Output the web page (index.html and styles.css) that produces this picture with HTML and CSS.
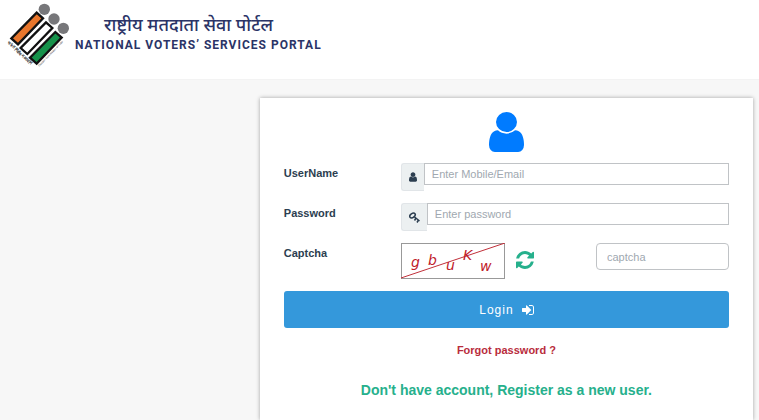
FILE: index.html
```html
<!DOCTYPE html>
<html lang="en">
<head>
    <meta charset="UTF-8">
    <meta name="viewport" content="width=device-width, initial-scale=1.0">
    <title>National Voters' Services Portal</title>
    <link rel="stylesheet" href="styles.css">
</head>
<body>
    <header class="header">
        <svg class="emblem" viewBox="0 0 210 210" aria-hidden="true">
            <g fill="#77777a">
                <circle cx="133" cy="28" r="17"/>
                <circle cx="162" cy="57" r="17"/>
                <circle cx="190" cy="85" r="17"/>
            </g>
            <g stroke="#111" stroke-width="7">
                <path fill="#e8762c" d="M110 38L129 55L54 133L34 115Z"/>
                <path fill="#fff" d="M138 67L157 84L82 162L62 144Z"/>
                <path fill="#16924a" d="M166 96L185 113L110 191L90 173Z"/>
            </g>
            <text class="emblem-text hindi" transform="translate(22 130) rotate(43)" lang="hi">भारत निर्वाचन आयोग</text>
            <text class="emblem-text" transform="translate(118 200) rotate(-46)">Election Commission of India</text>
        </svg>
        <div class="brand">
            <div class="brand-hindi" lang="hi">राष्ट्रीय मतदाता सेवा पोर्टल</div>
            <div class="brand-english">NATIONAL VOTERS’ SERVICES PORTAL</div>
        </div>
    </header>

    <main class="main">
        <form class="login-card">
            <svg class="avatar" viewBox="256 128 1280 1536" preserveAspectRatio="none" aria-hidden="true">
                <path d="M1536 1399q0 109-62.5 187t-150.5 78h-854q-88 0-150.5-78t-62.5-187q0-85 8.5-160.5t31.5-152 58.5-131 94-89 134.5-34.5q131 128 313 128t313-128q76 0 134.5 34.5t94 89 58.5 131 31.5 152 8.5 160.5zm-256-887q0 159-112.5 271.5t-271.5 112.5-271.5-112.5-112.5-271.5 112.5-271.5 271.5-112.5 271.5 112.5 112.5 271.5z"/>
            </svg>

            <div class="form-row">
                <label for="username">UserName</label>
                <div class="input-group">
                    <span class="addon">
                        <svg width="8" height="10" viewBox="256 128 1280 1536" aria-hidden="true">
                            <path d="M1536 1399q0 109-62.5 187t-150.5 78h-854q-88 0-150.5-78t-62.5-187q0-85 8.5-160.5t31.5-152 58.5-131 94-89 134.5-34.5q131 128 313 128t313-128q76 0 134.5 34.5t94 89 58.5 131 31.5 152 8.5 160.5zm-256-887q0 159-112.5 271.5t-271.5 112.5-271.5-112.5-112.5-271.5 112.5-271.5 271.5-112.5 271.5 112.5 112.5 271.5z"/>
                        </svg>
                    </span>
                    <input type="text" id="username" placeholder="Enter Mobile/Email">
                </div>
            </div>

            <div class="form-row">
                <label for="password">Password</label>
                <div class="input-group">
                    <span class="addon">
                        <svg class="key" width="11" height="11" viewBox="0 0 22 22" aria-hidden="true">
                            <ellipse cx="7" cy="7" rx="6" ry="4" transform="rotate(-35 7 7)"/>
                            <path d="M10 9L21 18M14 12L11 17M19 16L16 21"/>
                        </svg>
                    </span>
                    <input type="password" id="password" placeholder="Enter password">
                </div>
            </div>

            <div class="form-row">
                <label for="captcha">Captcha</label>
                <div class="captcha-group">
                    <svg class="captcha-image" viewBox="0 0 104 36" role="img" aria-label="Captcha">
                        <rect x="0.5" y="0.5" width="103" height="35"/>
                        <path d="M0 35L104 0"/>
                        <text x="10" y="24">g</text>
                        <text x="27" y="22">b</text>
                        <text x="45" y="27">u</text>
                        <text x="62" y="17">K</text>
                        <text x="79" y="28">w</text>
                    </svg>
                    <button type="button" class="refresh" aria-label="Refresh captcha">
                        <svg width="18" height="18" viewBox="128 128 1536 1536" aria-hidden="true">
                            <path d="M1639 1056q0 5-1 7-64 268-268 434.5t-478 166.5q-146 0-282.5-55t-243.5-157l-129 129q-19 19-45 19t-45-19-19-45v-448q0-26 19-45t45-19h448q26 0 45 19t19 45-19 45l-137 137q71 66 161 102t187 36q134 0 250-65t186-179q11-17 53-117 8-23 30-23h192q13 0 22.5 9.5t9.5 22.5zm25-800v448q0 26-19 45t-45 19h-448q-26 0-45-19t-19-45 19-45l138-138q-148-137-349-137-134 0-250 65t-186 179q-11 17-53 117-8 23-30 23h-199q-13 0-22.5-9.5t-9.5-22.5v-7q65-268 270-434.5t480-166.5q146 0 284 55.5t245 156.5l130-129q19-19 45-19t45 19 19 45z"/>
                        </svg>
                    </button>
                    <input type="text" id="captcha" placeholder="captcha">
                </div>
            </div>

            <button type="button" class="login-button">
                Login
                <svg width="12" height="12" viewBox="128 192 1536 1408" aria-hidden="true">
                    <path d="M1312 896q0 26-19 45l-544 544q-19 19-45 19t-45-19-19-45v-288h-448q-26 0-45-19t-19-45v-384q0-26 19-45t45-19h448v-288q0-26 19-45t45-19 45 19l544 544q19 19 19 45zm352-352v704q0 119-84.5 203.5t-203.5 84.5h-320q-13 0-22.5-9.5t-9.5-22.5q0-4-1-20t-.5-26.5 3-23.5 10-19.5 20.5-6.5h320q66 0 113-47t47-113v-704q0-66-47-113t-113-47h-312l-11.5-1-11.5-3-8-5.5-7-9-2-13.5q0-4-1-20t-.5-26.5 3-23.5 10-19.5 20.5-6.5h320q119 0 203.5 84.5t84.5 203.5z"/>
                </svg>
            </button>

            <a class="forgot" href="#">Forgot password ?</a>
            <a class="register" href="#">Don't have account, Register as a new user.</a>
        </form>
    </main>
</body>
</html>
```
FILE: styles.css
```css
* {
    box-sizing: border-box;
}
body {
    font-family: 'Liberation Sans', Arial, sans-serif;
    font-size: 11px;
    color: #2c3e50;
    background-color: #f7f7f7;
    margin: 0;
    min-height: 100vh;
    display: flex;
    flex-direction: column;
}
.header {
    display: flex;
    align-items: flex-start;
    background-color: #fff;
    height: 80px;
    border-bottom: 1px solid #f3f3f3;
}
.emblem {
    width: 70px;
    height: 70px;
    flex: none;
}
.emblem-text {
    font-size: 8px;
    fill: #333;
}
.emblem-text.hindi {
    font-size: 13px;
    font-weight: bold;
}
.brand {
    padding: 12px 0 0 5px;
    color: #2b3467;
    white-space: nowrap;
}
.brand-hindi {
    padding-left: 29px;
    font-family: 'Noto Sans', 'Noto Sans Devanagari', sans-serif;
    font-size: 18px;
    font-weight: 500;
    line-height: 25px;
}
.brand-english {
    font-family: Roboto, 'Liberation Sans', sans-serif;
    font-size: 12px;
    font-weight: bold;
    line-height: 16px;
    letter-spacing: 1px;
}
.main {
    flex: 1;
    display: flex;
    justify-content: flex-end;
    padding: 18px 6px 0 0;
}
.login-card {
    width: 65.5%;
    display: flex;
    flex-direction: column;
    padding: 14px 24px 20px;
    background-color: #fff;
    box-shadow: 0 0 4px rgba(0, 0, 0, 0.35);
}
.avatar {
    width: 35px;
    height: 40px;
    margin-bottom: 11px;
    align-self: center;
    fill: #007bff;
}
.form-row {
    display: flex;
    align-items: flex-start;
    height: 40px;
}
.form-row label {
    flex: 0 0 117px;
    font-weight: bold;
    line-height: 20px;
}
.input-group,
.captcha-group {
    flex: 1;
    display: flex;
    align-items: flex-start;
}
.addon {
    display: flex;
    padding: 0 7px;
    height: 28px;
    align-items: center;
    background-color: #ecf0f1;
    border: 1px solid #e1e5e8;
    border-right: none;
    border-radius: 3px 0 0 3px;
    fill: #2c3e50;
}
.key {
    fill: none;
    stroke: #2c3e50;
    stroke-width: 3;
}
input {
    font-family: inherit;
    color: #555;
    background-color: #fff;
    border: 1px solid #c0c3c6;
}
input::placeholder {
    color: #a0a8b0;
    opacity: 1;
}
.input-group input {
    flex: 1;
    min-width: 0;
    height: 22px;
    padding: 0 7px;
    font-size: 11px;
}
.captcha-image {
    width: 104px;
    height: 36px;
    fill: none;
    stroke: #999;
}
.captcha-image path {
    stroke: #c0303a;
}
.captcha-image text {
    font-family: 'DejaVu Sans', sans-serif;
    font-size: 14px;
    font-style: italic;
    fill: #c0202a;
    stroke: none;
}
.refresh {
    display: flex;
    margin: 8px 0 0 11px;
    padding: 0;
    border: none;
    background: none;
    fill: #26b08c;
    cursor: pointer;
}
.captcha-group input {
    width: 133px;
    height: 27px;
    margin-left: auto;
    padding: 0 10px;
    font-size: 11px;
    border-radius: 4px;
}
.login-button {
    display: flex;
    justify-content: center;
    align-items: center;
    gap: 8px;
    height: 37px;
    margin-top: 8px;
    font-family: inherit;
    font-size: 12px;
    letter-spacing: 1px;
    color: #fff;
    fill: #fff;
    background-color: #3498db;
    border: none;
    border-radius: 3px;
    cursor: pointer;
}
.forgot,
.register {
    align-self: center;
    font-weight: bold;
    text-decoration: none;
}
.forgot {
    margin-top: 14px;
    line-height: 16px;
    color: #b92c3c;
}
.register {
    margin-top: 22px;
    font-size: 14px;
    line-height: 20px;
    color: #26b08c;
}
```
